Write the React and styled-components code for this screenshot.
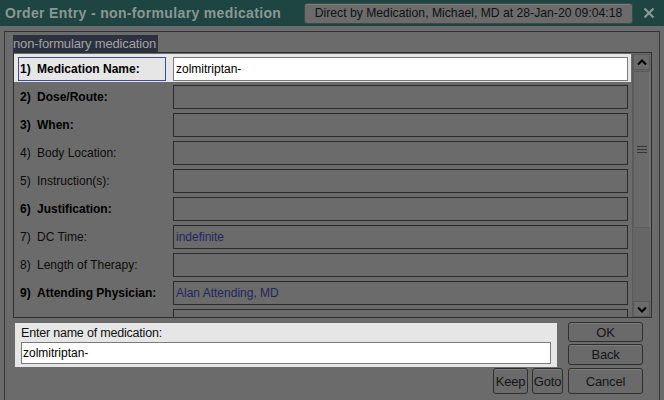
import React from 'react';
import styled, { createGlobalStyle } from 'styled-components';

const GlobalStyle = createGlobalStyle`
    html, body {
        margin: 0;
        padding: 0;
        background: #6b6b6b;
    }
    body {
        font-family: "Liberation Sans", Arial, sans-serif;
        font-size: 12px;
    }
`;

const Window = styled.div`
    width: 664px;
    height: 400px;
    overflow: hidden;
    background: #6b6b6b;
    display: flex;
    flex-direction: column;
`;

const TitleBar = styled.div`
    height: 26px;
    flex: none;
    display: flex;
    align-items: center;
    background: #1e4542;
    padding-left: 5px;
`;

const Title = styled.div`
    font-size: 14px;
    font-weight: bold;
    letter-spacing: 0.35px;
    color: #8b9795;
`;

const HeaderButton = styled.div`
    margin-left: auto;
    height: 19px;
    width: 327px;
    display: flex;
    align-items: center;
    justify-content: center;
    background: #6b6b6b;
    border: 1px solid #3d4a48;
    border-radius: 3px;
    font-size: 12.2px;
    color: #111;
    box-shadow: inset 0 1px 0 #7c7c7c;
`;

const CloseButton = styled.div`
    width: 31px;
    display: flex;
    justify-content: center;
    align-items: center;
`;

const Body = styled.div`
    flex: 1;
    padding: 5px 4px 0 4px;
    display: flex;
`;

const Frame = styled.div`
    flex: 1;
    border: 1px solid #333;
    border-bottom: none;
    padding: 3px 0 0 8px;
    display: flex;
    flex-direction: column;
    align-items: flex-start;
`;

const Caption = styled.div`
    height: 17px;
    line-height: 17px;
    width: 145px;
    background: #2c3140;
    color: #a3a3a3;
    font-size: 13px;
    letter-spacing: -0.15px;
    white-space: nowrap;
    overflow: hidden;
`;

const ListBox = styled.div`
    box-sizing: border-box;
    width: 639px;
    height: 266px;
    border: 1px solid #2e2e2e;
    display: flex;
    padding: 1px 1px 0 0;
`;

const Rows = styled.div`
    flex: 1;
    overflow: hidden;
    display: flex;
    flex-direction: column;
`;

const Row = styled.div`
    flex: none;
    height: 28px;
    box-sizing: border-box;
    padding: 3px 3px 1px 4px;
    display: flex;
    gap: 7px;
    background: ${p => (p.$selected ? '#e6e6e6' : 'transparent')};
`;

const Label = styled.div`
    width: 148px;
    box-sizing: border-box;
    border: 1px solid ${p => (p.$selected ? '#3b4aa8' : 'transparent')};
    display: flex;
    align-items: center;
    padding-left: 1px;
    font-size: 12px;
    font-weight: ${p => (p.$bold ? 'bold' : 'normal')};
    color: ${p => (p.$bold ? '#000' : '#0c0c0c')};
    white-space: nowrap;
`;

const Num = styled.span`
    display: inline-block;
    width: 17px;
`;

const Field = styled.div`
    flex: 1;
    box-sizing: border-box;
    border: 1px solid ${p => (p.$active ? '#7a7a7a' : '#2b2b2b')};
    background: ${p => (p.$active ? '#fff' : '#6b6b6b')};
    display: flex;
    align-items: center;
    padding-left: 2px;
    font-size: 12px;
    color: ${p => (p.$active ? '#000' : '#25255e')};
`;

const ScrollBar = styled.div`
    width: 17px;
    margin-left: 1px;
    display: flex;
    flex-direction: column;
    background: #666;
    border-left: 1px solid #5a5a5a;
`;

const ArrowButton = styled.div`
    height: 16px;
    flex: none;
    box-sizing: border-box;
    border: 1px solid #5a5a5a;
    background: #6c6c6c;
    display: flex;
    align-items: center;
    justify-content: center;
`;

const Track = styled.div`
    flex: 1;
    display: flex;
    flex-direction: column;
    padding: 1px 0;
`;

const Thumb = styled.div`
    height: 157px;
    box-sizing: border-box;
    border: 1px solid #5c5c5c;
    border-right-color: #777;
    background: #6a6a6a;
    display: flex;
    align-items: center;
    justify-content: center;
`;

const Bottom = styled.div`
    margin-top: 4px;
    margin-left: 2px;
    display: grid;
    grid-template-columns: 548px 75px;
    grid-template-rows: 45px 27px;
    column-gap: 5px;
`;

const Prompt = styled.div`
    margin-top: 1px;
    margin-right: 6px;
    background: #e6e6e6;
    padding: 2px 6px 0 6px;
    display: flex;
    flex-direction: column;
`;

const PromptLabel = styled.div`
    font-size: 12.5px;
    letter-spacing: -0.2px;
    color: #111;
    height: 17px;
    line-height: 17px;
`;

const PromptInput = styled.div`
    height: 22px;
    box-sizing: border-box;
    border: 1px solid #7a7a7a;
    background: #fff;
    display: flex;
    align-items: center;
    padding-left: 1px;
    font-size: 12px;
    color: #000;
`;

const Stack = styled.div`
    display: flex;
    flex-direction: column;
    gap: 2px;
`;

const SideRow = styled.div`
    display: flex;
    justify-content: flex-end;
    align-items: flex-start;
    gap: 4px;
    padding-top: 1px;
`;

const Button = styled.div`
    height: ${p => p.$h}px;
    width: ${p => (p.$w ? `${p.$w}px` : 'auto')};
    box-sizing: border-box;
    border: 1px solid #2f2f2f;
    border-radius: 3px;
    background: #6a6a6a;
    box-shadow: inset 0 1px 0 #7b7b7b;
    display: flex;
    align-items: center;
    justify-content: center;
    font-size: 13px;
    letter-spacing: -0.2px;
    color: #161616;
`;

const fields = [
    { n: '1)', label: 'Medication Name:', bold: true, value: 'zolmitriptan-', selected: true },
    { n: '2)', label: 'Dose/Route:', bold: true },
    { n: '3)', label: 'When:', bold: true },
    { n: '4)', label: 'Body Location:' },
    { n: '5)', label: 'Instruction(s):' },
    { n: '6)', label: 'Justification:', bold: true },
    { n: '7)', label: 'DC Time:', value: 'indefinite' },
    { n: '8)', label: 'Length of Therapy:' },
    { n: '9)', label: 'Attending Physician:', bold: true, value: 'Alan Attending, MD' },
    { n: '', label: '' },
];

function Chevron({ down }) {
    return (
        <svg width="10" height="7" viewBox="0 0 10 7">
            <path
                d={down ? 'M1 1.5 L5 5.5 L9 1.5' : 'M1 5.5 L5 1.5 L9 5.5'}
                fill="none"
                stroke="#000"
                strokeWidth="2"
            />
        </svg>
    );
}

export default function App() {
    return (
        <Window>
            <GlobalStyle />
            <TitleBar>
                <Title>Order Entry - non-formulary medication</Title>
                <HeaderButton>Direct by Medication, Michael, MD at 28-Jan-20 09:04:18</HeaderButton>
                <CloseButton>
                    <svg width="12" height="12" viewBox="0 0 12 12">
                        <path d="M1.5 1.5 L10.5 10.5 M10.5 1.5 L1.5 10.5" stroke="#8b9795" strokeWidth="2.2" />
                    </svg>
                </CloseButton>
            </TitleBar>
            <Body>
                <Frame>
                    <Caption>non-formulary medication</Caption>
                    <ListBox>
                        <Rows>
                            {fields.map((f, i) => (
                                <Row key={i} $selected={f.selected}>
                                    <Label $bold={f.bold} $selected={f.selected}>
                                        <Num>{f.n}</Num>
                                        {f.label}
                                    </Label>
                                    <Field $active={f.selected}>{f.value}</Field>
                                </Row>
                            ))}
                        </Rows>
                        <ScrollBar>
                            <ArrowButton><Chevron /></ArrowButton>
                            <Track>
                                <Thumb>
                                    <svg width="10" height="7" viewBox="0 0 10 7">
                                        <path d="M0 0.5 H10 M0 3.5 H10 M0 6.5 H10" stroke="#333" strokeWidth="1" />
                                    </svg>
                                </Thumb>
                            </Track>
                            <ArrowButton><Chevron down /></ArrowButton>
                        </ScrollBar>
                    </ListBox>
                    <Bottom>
                        <Prompt>
                            <PromptLabel>Enter name of medication:</PromptLabel>
                            <PromptInput>zolmitriptan-</PromptInput>
                        </Prompt>
                        <Stack>
                            <Button $h={20}>OK</Button>
                            <Button $h={21}>Back</Button>
                        </Stack>
                        <SideRow>
                            <Button $h={26} $w={35}>Keep</Button>
                            <Button $h={26} $w={31}>Goto</Button>
                        </SideRow>
                        <SideRow>
                            <Button $h={26} $w={75}>Cancel</Button>
                        </SideRow>
                    </Bottom>
                </Frame>
            </Body>
        </Window>
    );
}
